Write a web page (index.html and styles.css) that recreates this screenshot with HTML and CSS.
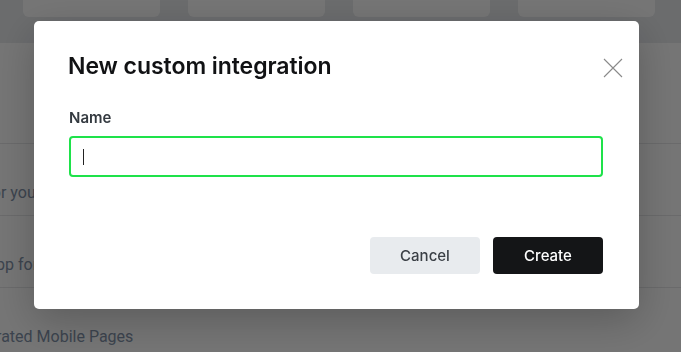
FILE: index.html
```html
<!DOCTYPE html>
<html lang="en">
<head>
    <meta charset="UTF-8">
    <meta name="viewport" content="width=device-width, initial-scale=1.0">
    <title>Integrations</title>
    <link rel="stylesheet" href="styles.css">
</head>
<body>
    <div class="page">
        <div class="top-band">
            <div class="card"></div>
            <div class="card"></div>
            <div class="card"></div>
            <div class="card"></div>
        </div>
        <ul class="integration-list">
            <li>Sync for your apps and tools</li>
            <li>Main app for every team</li>
            <li>Accelerated Mobile Pages</li>
        </ul>
    </div>

    <div class="overlay">
        <div class="modal">
            <button class="close-btn" aria-label="Close">
                <svg width="20" height="20" viewBox="0 0 20 20">
                    <path d="M1 1 L19 19 M19 1 L1 19" stroke="#8a8a8a" stroke-width="1.1" fill="none"/>
                </svg>
            </button>
            <h2 class="modal-title">New custom integration</h2>
            <label class="field-label">Name</label>
            <div class="text-input"><span class="caret"></span></div>
            <div class="modal-actions">
                <button class="btn btn-secondary">Cancel</button>
                <button class="btn btn-primary">Create</button>
            </div>
        </div>
    </div>
</body>
</html>
```

FILE: styles.css
```css
body {
    margin: 0;
    padding: 0;
    font-family: Inter, "Noto Sans", sans-serif;
    background: #fff;
    overflow: hidden;
}
.page {
    width: 681px;
    height: 352px;
}
.top-band {
    height: 43px;
    background: #e9ebee;
    display: flex;
    gap: 28px;
    padding-left: 23px;
    align-items: flex-start;
}
.card {
    width: 137px;
    height: 17px;
    background: #fff;
    border-radius: 0 0 6px 6px;
}
.integration-list {
    list-style: none;
    margin: 0;
    padding: 100px 0 0 0;
    margin-left: -52px;
    font-family: Roboto, sans-serif;
    font-size: 16px;
    color: #8393aa;
}
.integration-list li {
    height: 72px;
    box-sizing: border-box;
    border-top: 1px solid #e6e7e9;
    padding-top: 37px;
    line-height: 24px;
}
/* dimmed backdrop */
.overlay {
    position: fixed;
    inset: 0;
    background: rgba(0, 0, 0, 0.54);
    display: flex;
    align-items: flex-start;
    padding: 21px 0 0 34px;
}
.modal {
    position: relative;
    width: 605px;
    height: 288px;
    box-sizing: border-box;
    background: #fff;
    border-radius: 5px;
    padding: 31px 36px 35px 35px;
    box-shadow: 0 12px 40px rgba(0, 0, 0, 0.22);
    display: flex;
    flex-direction: column;
}
.close-btn {
    position: absolute;
    top: 37px;
    right: 16px;
    background: none;
    border: none;
    padding: 0;
    cursor: pointer;
    line-height: 0;
}
.modal-title {
    margin: 0 0 0 -1px;
    font-size: 23px;
    line-height: 28px;
    font-weight: 600;
    color: #111214;
    letter-spacing: -0.05px;
}
.field-label {
    margin-top: 28px;
    font-size: 15px;
    line-height: 20px;
    font-weight: 600;
    color: #343a40;
}
.text-input {
    margin-top: 8px;
    height: 41px;
    box-sizing: border-box;
    border: 2px solid #1ee24a;
    border-radius: 4px;
    display: flex;
    align-items: center;
    padding-left: 12px;
}
.caret {
    width: 1px;
    height: 16px;
    background: #222;
}
.modal-actions {
    margin-top: auto;
    display: flex;
    justify-content: flex-end;
    gap: 13px;
}
.btn {
    width: 110px;
    height: 37px;
    border: none;
    border-radius: 4px;
    font-family: Inter, sans-serif;
    font-size: 15px;
    font-weight: 500;
    cursor: pointer;
}
.btn-secondary {
    background: #e8ebee;
    color: #3a3f45;
}
.btn-primary {
    background: #141517;
    color: #fff;
}
```
